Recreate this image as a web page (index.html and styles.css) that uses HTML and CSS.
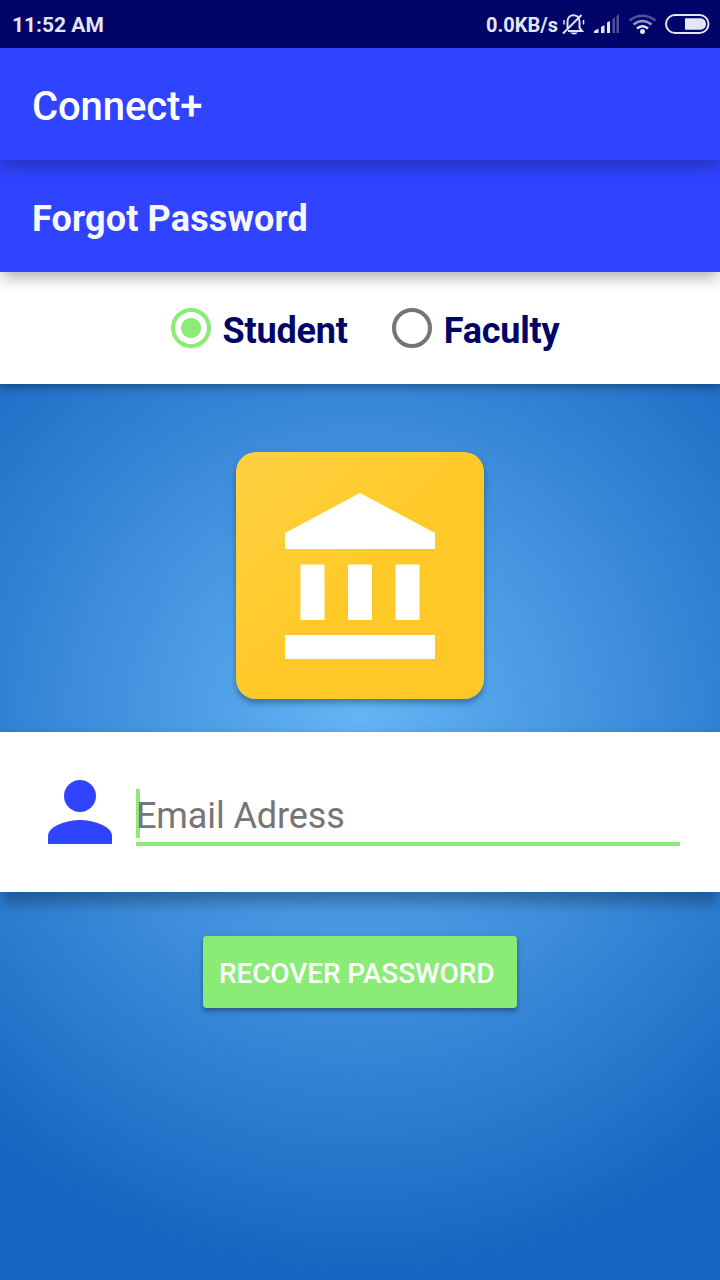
FILE: index.html
```html
<!DOCTYPE html>
<html lang="en">
<head>
<meta charset="utf-8">
<title>Connect+</title>
<link rel="stylesheet" href="styles.css">
</head>
<body>
<div class="screen">
  <header class="status-bar">
    <span class="clock">11:52 AM</span>
    <span class="net-speed">0.0KB/s</span>
    <svg class="status-icons" width="160" height="48" viewBox="0 0 160 48">
      <g fill="none" stroke="#e4e5f6" stroke-width="2">
        <path d="M7.500 28V21.500c0-8.500 12-8.500 12 0V28l2.500 3H8"/>
        <path d="M3 33.500L21.500 15"/>
        <path d="M4 20v4.500M23.500 20v4.500" stroke-width="1.500"/>
      </g>
      <path d="M10 32.500h8q-4 4-8 0z" fill="#e4e5f6"/>
      <g fill="#e4e5f6">
        <path d="M34 33v-2l4.500-2.500v4.500zM41 33v-6l3.500-2v8zM47 33V22.500l3-1.500v12z"/>
        <path d="M52.500 33V19l2.500-1.500v15.500zM56.500 33V16l2.500-2v19z" opacity=".35"/>
      </g>
      <g fill="none" stroke="#e4e5f6" stroke-width="2.600">
        <path d="M69.500 20.500q13-9.500 26 0" opacity=".35"/>
        <path d="M73.500 24.500q9-7 18 0" opacity=".65"/>
        <path d="M77 28.500q5.500-4.500 11 0"/>
      </g>
      <circle cx="82.500" cy="31.500" r="2.500" fill="#e4e5f6"/>
      <rect x="106" y="15" width="42.500" height="18" rx="9" fill="none" stroke="#e4e5f6" stroke-width="2"/>
      <path d="M125 18.200h16q5 1 5 5.800t-5 5.800h-16z" fill="#e4e5f6"/>
    </svg>
  </header>
  <div class="app-bar"><span class="app-title">Connect+</span></div>
  <div class="page-bar"><h1 class="page-title">Forgot Password</h1></div>
  <div class="roles">
    <label class="role"><span class="radio radio-on"></span><span class="role-name">Student</span></label>
    <label class="role"><span class="radio"></span><span class="role-name">Faculty</span></label>
  </div>
  <div class="hero">
    <div class="logo">
      <svg width="152" height="168" viewBox="0 0 152 168" fill="#fff">
        <path d="M1 40L76 0l75 40v16H1zM16.500 71.500h24v55.500h-24zM64 71.500h24v55.500H64zM111.500 71.500h24v55.500h-24zM1 142h150v24H1z"/>
      </svg>
    </div>
  </div>
  <div class="email-card">
    <svg class="person" width="64" height="64" viewBox="0 0 64 64" fill="#3044ff">
      <circle cx="32" cy="16" r="16"/><path d="M0 64V56c0-10.600 21.300-16 32-16s32 5.400 32 16v8z"/>
    </svg>
    <div class="field"><span class="caret"></span><span class="hint">Email Adress</span></div>
  </div>
  <div class="actions"><button class="recover">RECOVER PASSWORD</button></div>
</div>
</body>
</html>
```

FILE: styles.css
```css
* { box-sizing: border-box; }
body { margin: 0; font-family: Roboto, sans-serif; }
.screen {
  width: 720px;
  height: 1280px;
  overflow: hidden;
  display: flex;
  flex-direction: column;
  background: radial-gradient(circle 560px at 360px 720px, #64b5f6, #1565c0);
}
.status-bar {
  height: 48px;
  display: flex;
  align-items: center;
  padding-left: 12px;
  background: #000468;
  color: #e4e5f6;
  font-size: 20px;
  font-weight: 700;
  line-height: 24px;
}
.clock { font-size: 21px; padding-top: 1px; }
.net-speed { margin-left: auto; padding-top: 1px; }
.status-icons { margin-left: 2px; }
.app-bar, .page-bar {
  height: 112px;
  display: flex;
  align-items: center;
  padding-left: 32px;
  background: #3044ff;
  color: #fff;
}
.app-bar { position: relative; z-index: 3; box-shadow: 0 8px 16px -2px rgba(0, 0, 0, .3); }
.app-title { font-size: 40px; font-weight: 500; line-height: 48px; padding-top: 5px; letter-spacing: -.1px; }
.page-bar { position: relative; z-index: 2; box-shadow: 0 8px 14px -2px rgba(0, 0, 0, .3); }
.page-title { margin: 0; padding-top: 6px; font-size: 36px; font-weight: 700; line-height: 42px; letter-spacing: .15px; color: #f7f7ff; }
.roles {
  height: 112px;
  display: flex;
  align-items: center;
  gap: 44px;
  padding-left: 170.5px;
  background: #fff;
  box-shadow: 0 2px 10px rgba(0, 0, 0, .4);
}
.role { display: flex; align-items: center; gap: 12px; }
.radio {
  width: 40px;
  height: 40px;
  border: 4px solid #757575;
  border-radius: 50%;
}
.radio-on {
  border-color: #8aeb76;
  background: radial-gradient(circle, #8aeb76 9.5px, #fff 10.500px);
}
.role-name { font-size: 36px; font-weight: 700; line-height: 42px; padding-top: 6px; margin-bottom: 1px; letter-spacing: -.2px; color: #000468; }
.hero { height: 348px; padding-top: 68px; display: flex; justify-content: center; }
.logo {
  width: 248px;
  height: 247px;
  border-radius: 20px;
  padding-top: 2px;
  display: flex;
  align-items: center;
  justify-content: center;
  background: linear-gradient(135deg, #ffd042, #ffca29 50%, #ffc727);
  box-shadow: 0 4px 6px rgba(0, 0, 0, .32);
}
.email-card {
  height: 160px;
  display: flex;
  align-items: center;
  gap: 24px;
  padding: 0 40px 0 48px;
  background: #fff;
  box-shadow: 0 14px 12px -2px rgba(0, 0, 0, .25), 0 0 8px rgba(0, 0, 0, .1);
}
.field {
  position: relative;
  flex: 1;
  height: 57px;
  margin-top: 11px;
  border-bottom: 4px solid #8aeb76;
}
.caret { position: absolute; left: 0; top: 0; width: 4px; height: 49px; background: #8aeb76; }
.hint { position: relative; display: block; font-size: 36px; line-height: 42px; padding-top: 6px; letter-spacing: -.1px; color: #757575; }
.actions { padding-top: 44px; display: flex; justify-content: center; }
.recover {
  width: 314px;
  height: 72px;
  border: 0;
  border-radius: 4px;
  padding: 4px 16px 0;
  white-space: nowrap;
  font: 500 28px/32px Roboto, sans-serif;
  letter-spacing: -.12px;
  text-align: left;
  color: #fff;
  background: #8aeb76;
  box-shadow: 0 3px 5px rgba(0, 0, 0, .35);
}
```
